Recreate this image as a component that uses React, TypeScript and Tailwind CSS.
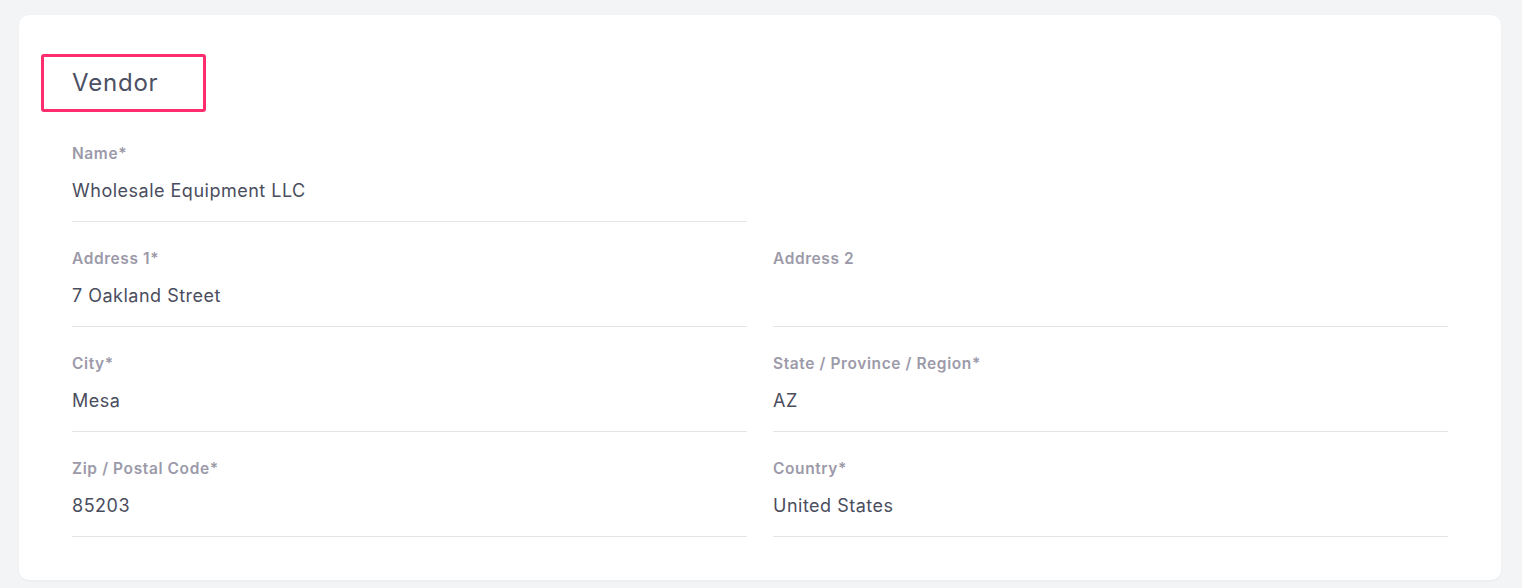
const fields: { label: string; value: string }[][] = [
  [{ label: 'Name*', value: 'Wholesale Equipment LLC' }],
  [
    { label: 'Address 1*', value: '7 Oakland Street' },
    { label: 'Address 2', value: '' },
  ],
  [
    { label: 'City*', value: 'Mesa' },
    { label: 'State / Province / Region*', value: 'AZ' },
  ],
  [
    { label: 'Zip / Postal Code*', value: '85203' },
    { label: 'Country*', value: 'United States' },
  ],
]

function Field({ label, value }: { label: string; value: string }) {
  return (
    <div className="border-b border-[#e4e4e8] pt-px pb-[16px]">
      <div className="text-[15.5px] leading-5 font-semibold tracking-[0.6px] text-[#9c9aa9]">{label}</div>
      <div className="mt-[13px] h-7 text-[18px] leading-7 tracking-[0.5px] text-[#4a4d5d]">{value}</div>
    </div>
  )
}

export default function App() {
  return (
    <div
      className="min-h-[588px] w-full bg-[#f3f4f6] pl-[19px] pr-[21px] pt-[15px] pb-2"
      style={{ fontFamily: 'Inter, "Noto Sans", sans-serif' }}
    >
      <div className="rounded-[10px] bg-white pt-[39px] pb-[43px] shadow-[0_1px_3px_rgba(0,0,0,0.04)]">
        {/* heading with highlight box */}
        <div className="ml-[22px] inline-flex h-[58px] w-[165px] items-center rounded-[3px] border-[3px] border-[#ff2d6d] pl-[28px]">
          <h2 className="text-[24px] leading-none font-normal tracking-[0.8px] text-[#4b5064]">Vendor</h2>
        </div>

        <div className="mt-[31px] flex flex-col gap-[26px] px-[53px]">
          {fields.map((row, i) => (
            <div key={i} className="grid grid-cols-2 gap-x-[26px]">
              {row.map((f) => (
                <Field key={f.label} label={f.label} value={f.value} />
              ))}
            </div>
          ))}
        </div>
      </div>
    </div>
  )
}
